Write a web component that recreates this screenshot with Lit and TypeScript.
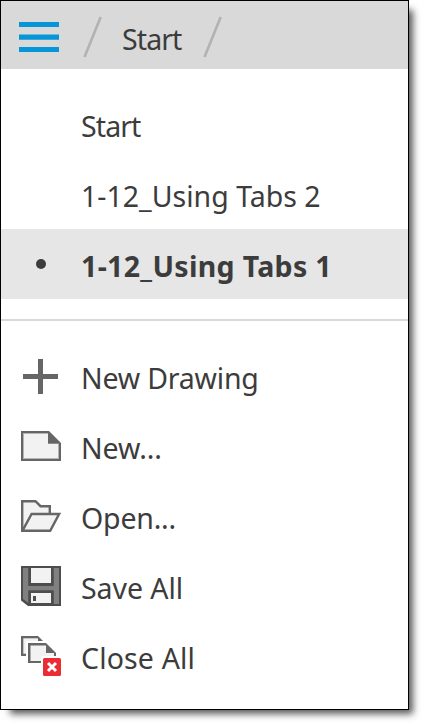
import { LitElement, html, css, svg, nothing } from "lit";
import { customElement } from "lit/decorators.js";
import { styleMap } from "lit/directives/style-map.js";

const icons: Record<string, unknown> = {
  plus: svg`<path fill="#666" d="M17 3h5v15h15v5H22v15h-5V23H2v-5h15z"/>`,
  sheet: svg`
    <path fill="#666" d="M0 5h28L40 17v18H0z"/>
    <path fill="#b4b4b4" d="M2 7h25v10.500h11V33H2z"/>
    <path fill="#f2f2f2" d="M3 8h24v10h10v14H3z"/>`,
  folder: svg`
    <path fill="#f2f2f2" stroke="#666" stroke-width="2.400" d="M1.200 35V5.200h13.300l5 5h9.300V18"/>
    <path fill="#f2f2f2" stroke="#666" stroke-width="2.400" d="M1.400 34.800 10.600 18H38.100L29.200 34.800z"/>`,
  disk: svg`
    <path fill="#4d4d4d" d="M0 0h40v40H7L0 34.500z"/>
    <path fill="#808080" d="M2 2h5.500v18h25V2H38v36h-5.500V24.500h-25V37L2 33z"/>
    <path fill="#4d4d4d" d="M7.500 0h25v20h-25zM7.500 24.500h25V40h-25z"/>
    <path fill="#f2f2f2" d="M10 2h20v15H10zM10 27h20v10H10z"/>
    <path fill="#4d4d4d" d="M12 30h3v5h-3z"/>`,
  closeAll: svg`
    <path fill="#666" d="M0 0h17l5 5v15H0z"/>
    <path fill="#f2f2f2" d="M2.300 2.300H17v15.400H2.300z"/>
    <path fill="#fff" d="M5 5h22l10 10v14H5z"/>
    <path fill="#666" d="M7 7h18l10 10v10H7z"/>
    <path fill="#f2f2f2" d="M9.500 9.500H25V17h8v8H9.500z"/>
    <rect fill="#fff" x="20" y="20" width="20" height="20" rx="2"/>
    <rect fill="#eb2d33" x="22" y="22" width="18" height="18" rx="1.500"/>
    <path stroke="#fff" stroke-width="3" d="m27 27 8 8m0-8-8 8"/>`,
  dot: svg`<circle fill="#3c3c3c" cx="20" cy="20" r="5"/>`,
};

interface Item {
  label: string;
  icon?: string;
  active?: boolean;
  tracking: number;
}

const tabs: Item[] = [
  { label: "Start", tracking: -0.9 },
  { label: "1-12_Using Tabs 2", tracking: 0 },
  { label: "1-12_Using Tabs 1", icon: "dot", active: true, tracking: 0.33 },
];

const actions: Item[] = [
  { label: "New Drawing", icon: "plus", tracking: -0.2 },
  { label: "New...", icon: "sheet", tracking: -0.1 },
  { label: "Open...", icon: "folder", tracking: -0.2 },
  { label: "Save All", icon: "disk", tracking: -0.05 },
  { label: "Close All", icon: "closeAll", tracking: 0.15 },
];

@customElement("app-root")
export class AppRoot extends LitElement {
  static styles = css`
    :host {
      display: block;
      box-sizing: border-box;
      height: 725px;
      background: #fff;
      overflow: hidden;
      font-family: "Noto Sans", "Open Sans", sans-serif;
      font-size: 28.5px;
      color: #3c3c3c;
    }
    .panel {
      box-sizing: border-box;
      width: 409px;
      height: 710px;
      border: 1px solid #000;
      background: #fff;
      box-shadow: 7px 7px 7px -3px rgba(0, 0, 0, 0.65);
    }
    .bar {
      display: flex;
      align-items: center;
      height: 68px;
      background: #d9d9d9;
    }
    .menu {
      width: 40px;
      height: 30px;
      margin: 4px 24px 0 18px;
    }
    .slash {
      width: 20px;
      height: 42px;
      margin-top: 3px;
    }
    .crumb {
      box-sizing: border-box;
      width: 100px;
      padding: 7px 0 0 19px;
      line-height: 40px;
      letter-spacing: -0.9px;
      white-space: nowrap;
    }
    .list {
      padding: 20px 0;
    }
    .list + .list {
      border-top: 2px solid #d9d9d9;
    }
    .row {
      display: flex;
      align-items: center;
      height: 70px;
    }
    .active {
      background: #e6e6e6;
      font-weight: 700;
    }
    .icon {
      width: 40px;
      height: 40px;
      margin: 0 20px;
    }
    .icon svg,
    .menu,
    .slash {
      display: block;
      flex: none;
    }
    .label {
      line-height: 40px;
      padding-top: 4px;
      white-space: nowrap;
    }
  `;

  private row(item: Item) {
    return html`<div class="row ${item.active ? "active" : ""}">
      <div class="icon">
        ${item.icon
          ? html`<svg width="40" height="40" viewBox="0 0 40 40" fill="none">${icons[item.icon]}</svg>`
          : nothing}
      </div>
      <span class="label" style=${styleMap({ letterSpacing: `${item.tracking}px` })}>${item.label}</span>
    </div>`;
  }

  private slash() {
    return html`<svg class="slash" viewBox="0 0 20 42">
      <path stroke="#b2b2b2" stroke-width="2.600" d="M17.700 1 1.500 41" />
    </svg>`;
  }

  render() {
    return html`<div class="panel">
      <div class="bar">
        <svg class="menu" viewBox="0 0 40 30">
          <path fill="#0696d7" d="M0 0h40v5H0zM0 12.400h40v5.300H0zM0 25h40v5H0z" />
        </svg>
        ${this.slash()}
        <span class="crumb">Start</span>
        ${this.slash()}
      </div>
      <div class="list">${tabs.map((t) => this.row(t))}</div>
      <div class="list">${actions.map((a) => this.row(a))}</div>
    </div>`;
  }
}
